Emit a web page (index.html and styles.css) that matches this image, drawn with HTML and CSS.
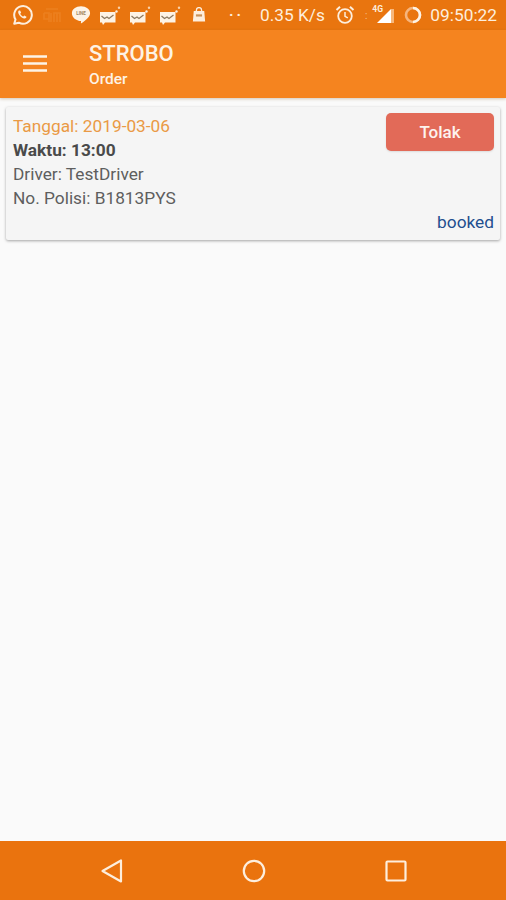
FILE: index.html
```html
<!DOCTYPE html>
<html lang="id">
<head>
  <meta charset="UTF-8">
  <meta name="viewport" content="width=device-width, initial-scale=1.0">
  <title>STROBO Order</title>
  <link rel="stylesheet" href="styles.css">
</head>
<body>

<div class="status-bar">
  <div class="status-left">
    <svg width="22" height="22" viewBox="0 0 24 24">
      <path d="M3.500 21.500l1.400-4.600A9.600 9.600 0 1 1 8.600 20.400z" fill="none" stroke="#fdeedd" stroke-width="2.200" stroke-linejoin="round"/>
      <path d="M8.600 7.200c-1.200 1-1 2.900.6 5 1.600 2.100 3.600 3.700 5.600 3.600 1.200-.1 2-.9 2.100-1.900l-2.400-1.300-1.100 1.100c-1.300-.5-2.700-1.900-3.300-3.200l1-1.100-1.200-2.400z" fill="#fdeedd"/>
    </svg>
    <svg class="ic-faint" width="18" height="18" viewBox="0 0 18 18">
      <path d="M1 7h5v9M1 7v6h5M8 7v9M11 16V7h6v9M14 7v9M3 3h12" fill="none" stroke="#f08a2c" stroke-width="1.600"/>
    </svg>
    <svg class="ic-line" width="20" height="20" viewBox="0 0 22 22">
      <path d="M11 1.500c5.600 0 10 3.200 10 7.500 0 4-5 8-9.500 11-.5.300-.7 0-.6-.5l.2-1.800C5.500 17.300 1 13.700 1 9c0-4.300 4.400-7.500 10-7.500z" fill="#fdf3e6"/>
      <text x="11" y="11" text-anchor="middle" class="ic-text">LINE</text>
    </svg>
    <svg class="ic-mail" width="22" height="20" viewBox="0 0 22 20"><use href="#mail"/></svg>
    <svg class="ic-mail" width="22" height="20" viewBox="0 0 22 20"><use href="#mail"/></svg>
    <svg class="ic-mail" width="22" height="20" viewBox="0 0 22 20"><use href="#mail"/></svg>
    <svg class="ic-bag" width="14" height="16" viewBox="0 0 16 18">
      <path d="M2 4.500h12l1 12H1z" fill="#fdeedd"/>
      <path d="M5 6V3.500a3 3 0 0 1 6 0V6" fill="none" stroke="#fdeedd" stroke-width="1.500"/>
      <path d="M4.500 9.500h7" stroke="#c9925a" stroke-width="2.500"/>
    </svg>
    <span class="dots">··</span>
  </div>
  <div class="status-right">
    <span class="speed">0.35 K/s</span>
    <svg class="ic-alarm" width="20" height="20" viewBox="0 0 20 20">
      <circle cx="10" cy="11" r="6.800" fill="none" stroke="#fdeedd" stroke-width="1.800"/>
      <path d="M10 7v4.300l2.800 1.600" fill="none" stroke="#fdeedd" stroke-width="1.500"/>
      <path d="M1.500 5L5 1.800M18.500 5L15 1.800" stroke="#fdeedd" stroke-width="2"/>
    </svg>
    <span class="sep">:</span>
    <span class="signal">
      <span class="net">4G</span>
      <svg width="18" height="18" viewBox="0 0 18 18">
        <path d="M0 17L14 3v14z" fill="#fff"/>
        <path d="M14 3h3v14h-3z" fill="#f7b77c"/>
      </svg>
    </span>
    <svg class="ic-batt" width="18" height="18" viewBox="0 0 18 18">
      <circle cx="9" cy="9" r="7" fill="none" stroke="#f6b57e" stroke-width="2.600"/>
      <path d="M9 2a7 7 0 0 1 0 14" fill="none" stroke="#fdf3e6" stroke-width="2.600"/>
    </svg>
    <span class="clock">09:50:22</span>
  </div>
</div>

<svg class="defs" width="0" height="0">
  <defs>
    <g id="mail">
      <path d="M1 6h15.500v10.500H6L4 19l-1-2.500H1z" fill="#fdf3e6"/>
      <path d="M2.500 10l3 2.500 2.500-1.500 2 1.500 4.500-3.500" fill="none" stroke="#8c7a62" stroke-width="1.300"/>
      <circle cx="17.500" cy="5.500" r="1.200" fill="#fdeedd"/>
      <circle cx="20" cy="1.800" r="1.200" fill="#f9d2aa"/>
    </g>
  </defs>
</svg>

<header class="app-bar">
  <svg class="menu-icon" width="24" height="18" viewBox="0 0 24 18">
    <path d="M0 2.500h24M0 9.500h24M0 16.500h24" stroke="#fdf3e6" stroke-width="2.600"/>
  </svg>
  <div class="app-title">
    <div class="app-name">STROBO</div>
    <div class="app-sub">Order</div>
  </div>
</header>

<main class="content">
  <div class="order-card">
    <div class="order-info">
      <div class="order-date">Tanggal: 2019-03-06</div>
      <div class="order-time">Waktu: 13:00</div>
      <div class="order-line">Driver: TestDriver</div>
      <div class="order-line">No. Polisi: B1813PYS</div>
    </div>
    <div class="order-side">
      <button class="btn-reject">Tolak</button>
      <span class="order-status">booked</span>
    </div>
  </div>
</main>

<nav class="nav-bar">
  <svg width="24" height="26" viewBox="0 0 24 26">
    <path d="M2.500 13L21 2.500v21z" fill="none" stroke="#fdeedd" stroke-width="2.200" stroke-linejoin="round"/>
  </svg>
  <svg class="nav-home" width="24" height="24" viewBox="0 0 24 24">
    <circle cx="12" cy="12" r="10.200" fill="none" stroke="#fdeedd" stroke-width="2.200"/>
  </svg>
  <svg width="22" height="22" viewBox="0 0 22 22">
    <rect x="1.500" y="1.500" width="19" height="19" rx="1" fill="none" stroke="#fdeedd" stroke-width="2.200"/>
  </svg>
</nav>

</body>
</html>
```

FILE: styles.css
```css
* {
  box-sizing: border-box;
}

html, body {
  height: 100%;
}

body {
  margin: 0;
  display: flex;
  flex-direction: column;
  height: 900px;
  overflow: hidden;
  font-family: Roboto, "Liberation Sans", sans-serif;
  background: #fafafa;
  color: #5e5e5e;
}

.defs {
  position: absolute;
}

.status-bar {
  display: flex;
  justify-content: space-between;
  align-items: center;
  height: 30px;
  padding: 0 9px 0 11px;
  background: #e9750f;
  color: #fdeedd;
}
.status-left, .status-right {
  display: flex;
  align-items: center;
}
.ic-faint {
  margin-left: 10px;
  opacity: 0.55;
}
.ic-line {
  margin-left: 10px;
}
.ic-text {
  font-size: 5px;
  font-weight: bold;
  fill: #a08660;
}
.ic-mail {
  margin-left: 8px;
  margin-top: 2px;
}
.ic-bag {
  margin-left: 11px;
}
.dots {
  margin-left: 23px;
  font-size: 15px;
  font-weight: bold;
  letter-spacing: 3px;
}
.speed {
  font-size: 17.3px;
}
.ic-alarm {
  margin-left: 10px;
}
.sep {
  margin-left: 10px;
  font-size: 10px;
  opacity: 0.6;
}
.signal {
  position: relative;
  display: flex;
  margin-left: 10px;
}
.net {
  position: absolute;
  top: -2px;
  left: -5px;
  font-size: 8.500px;
  font-weight: bold;
}
.ic-batt {
  margin-left: 9px;
}
.clock {
  margin-left: 8px;
  font-size: 17.3px;
}

.app-bar {
  display: flex;
  align-items: center;
  height: 68px;
  padding-left: 23px;
  background: #f5841f;
  box-shadow: 0 1px 3px rgba(120, 80, 30, 0.3);
  color: #fdf3e6;
}
.menu-icon {
  margin-top: -3px;
}
.app-title {
  margin-left: 42px;
  margin-top: 2px;
}
.app-name {
  font-size: 22px;
  font-weight: 500;
  line-height: 28px;
}
.app-sub {
  font-size: 15.500px;
  font-weight: 500;
  line-height: 22px;
}

.content {
  flex: 1;
  padding: 9px 6px;
}
.order-card {
  display: flex;
  justify-content: space-between;
  height: 133px;
  padding: 7px 6px 6px 7px;
  background: #f5f5f5;
  border-radius: 2px;
  box-shadow: 0 1px 3px rgba(0, 0, 0, 0.35);
}
.order-info {
  font-size: 17.3px;
  line-height: 24px;
}
.order-date {
  color: #ea9a45;
}
.order-time {
  font-weight: bold;
  color: #4a4a4a;
}
.order-side {
  display: flex;
  flex-direction: column;
  align-items: flex-end;
  justify-content: space-between;
}
.btn-reject {
  width: 108px;
  height: 38px;
  margin-top: -1px;
  border: none;
  border-radius: 5px;
  background: #e26a58;
  color: #fdf3ee;
  font-family: inherit;
  font-size: 17px;
  font-weight: 500;
  box-shadow: 0 1px 2px rgba(0, 0, 0, 0.1);
}
.order-status {
  font-size: 17.3px;
  line-height: 24px;
  color: #1f4f8f;
}

.nav-bar {
  display: flex;
  justify-content: space-between;
  align-items: center;
  height: 59px;
  padding: 0 99px 0 100px;
  background: #ea730e;
}
.nav-home {
  margin-left: -2px;
}
```
